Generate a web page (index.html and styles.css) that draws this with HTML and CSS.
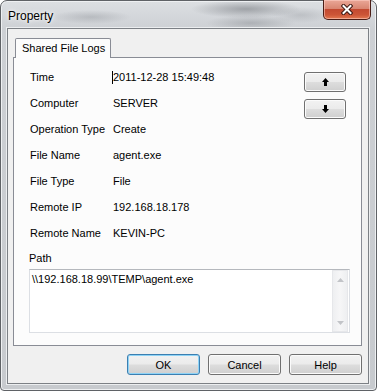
FILE: index.html
```html
<!DOCTYPE html>
<html lang="en">
<head>
    <meta charset="UTF-8">
    <title>Property</title>
    <link rel="stylesheet" href="styles.css">
</head>
<body>
    <div class="window">
        <div class="titlebar">
            <span class="title">Property</span>
            <button class="close" aria-label="Close">
                <svg width="12" height="11" viewBox="0 0 12 11">
                    <path d="M2.5 2 L9.5 9 M9.5 2 L2.5 9" stroke="#3b1712" stroke-width="4" stroke-linecap="square" fill="none"/>
                    <path d="M2.5 2 L9.5 9 M9.5 2 L2.5 9" stroke="#fff" stroke-width="2" stroke-linecap="square" fill="none"/>
                </svg>
            </button>
        </div>

        <div class="client">
            <div class="tabs">
                <div class="tab">Shared File Logs</div>
            </div>

            <div class="panel">
                <div class="top">
                    <dl class="fields">
                        <dt>Time</dt><dd><span class="caret"></span>2011-12-28 15:49:48</dd>
                        <dt>Computer</dt><dd>SERVER</dd>
                        <dt>Operation Type</dt><dd>Create</dd>
                        <dt>File Name</dt><dd>agent.exe</dd>
                        <dt>File Type</dt><dd>File</dd>
                        <dt>Remote IP</dt><dd>192.168.18.178</dd>
                        <dt>Remote Name</dt><dd>KEVIN-PC</dd>
                    </dl>
                    <div class="arrows">
                        <button class="btn arrow-btn" aria-label="Previous">
                            <svg width="7" height="8" viewBox="0 0 7 8"><path d="M3.5 0L7 4H5V8H2V4H0Z" fill="#000"/></svg>
                        </button>
                        <button class="btn arrow-btn" aria-label="Next">
                            <svg width="7" height="8" viewBox="0 0 7 8"><path d="M3.5 8L7 4H5V0H2V4H0Z" fill="#000"/></svg>
                        </button>
                    </div>
                </div>

                <div class="path-label">Path</div>
                <div class="textbox">
                    <div class="textbox-text">\\192.168.18.99\TEMP\agent.exe</div>
                    <div class="scrollbar">
                        <div class="scroll-arrow">
                            <svg width="7" height="4" viewBox="0 0 7 4"><path d="M3.5 0L7 4H0Z" fill="#c2c4c8"/></svg>
                        </div>
                        <div class="scroll-arrow">
                            <svg width="7" height="4" viewBox="0 0 7 4"><path d="M3.5 4L7 0H0Z" fill="#c2c4c8"/></svg>
                        </div>
                    </div>
                </div>
            </div>

            <div class="buttons">
                <button class="btn btn-default">OK</button>
                <button class="btn">Cancel</button>
                <button class="btn">Help</button>
            </div>
        </div>
    </div>
</body>
</html>
```

FILE: styles.css
```css
/* ウィンドウ全体 */
html, body {
    margin: 0;
    padding: 0;
}

body {
    width: 377px;
    height: 391px;
    font-family: "Liberation Sans", Arial, sans-serif;
    font-size: 11px;
    color: #000;
    background-color: #fff;
}

.window {
    box-sizing: border-box;
    width: 377px;
    height: 391px;
    border: 1px solid #5f6266;
    border-radius: 7px 7px 4px 4px;
    box-shadow: inset 0 0 0 1px #eef0f2;
    display: flex;
    flex-direction: column;
    background:
        radial-gradient(ellipse 55px 9px at 245px 8px, rgba(90, 94, 100, 0.45), rgba(90, 94, 100, 0)),
        radial-gradient(ellipse 45px 8px at 250px 22px, rgba(110, 114, 120, 0.35), rgba(110, 114, 120, 0)),
        radial-gradient(ellipse 40px 7px at 90px 16px, rgba(120, 124, 130, 0.3), rgba(120, 124, 130, 0)),
        radial-gradient(ellipse 30px 8px at 300px 14px, rgba(120, 124, 130, 0.25), rgba(120, 124, 130, 0)),
        linear-gradient(#dcdfe2, #cdd0d4 28px, #c7cace);
}

/* タイトルバー */
.titlebar {
    height: 27px;
    display: flex;
    align-items: flex-start;
    padding-left: 7px;
}

.title {
    font-size: 12px;
    line-height: 27px;
    margin-top: 2px;
    text-shadow: 0 0 6px #fff, 0 0 3px #fff;
}

.close {
    margin: -1px 5px 0 auto;
    padding: 0;
    width: 48px;
    height: 20px;
    border: 1px solid #4a1d16;
    border-top: none;
    border-radius: 0 0 5px 5px;
    background: linear-gradient(#eaa797 0%, #d98672 45%, #c34a31 50%, #cc5537 78%, #e47a52 100%);
    box-shadow: inset 0 0 0 1px rgba(255, 210, 200, 0.55);
    display: flex;
    align-items: center;
    justify-content: center;
}

/* クライアント領域 */
.client {
    flex: 1;
    margin: 0 7px 6px 6px;
    border: 1px solid #7c8085;
    box-shadow: 0 0 0 1px #eceef0;
    background-color: #f0f0f0;
    padding: 9px 6px 8px 5px;
    display: flex;
    flex-direction: column;
}

/* タブ */
.tabs {
    display: flex;
    height: 20px;
}

.tabs::before,
.tabs::after {
    content: "";
    border-bottom: 1px solid #898c95;
}

.tabs::before {
    width: 2px;
}

.tabs::after {
    flex: 1;
}

.tab {
    box-sizing: border-box;
    width: 96px;
    padding-left: 6px;
    border: 1px solid #898c95;
    border-bottom: none;
    border-radius: 2px 2px 0 0;
    background-color: #fcfcfc;
    line-height: 19px;
}

.panel {
    box-sizing: border-box;
    height: 288px;
    border: 1px solid #898c95;
    border-top: none;
    background-color: #fcfcfc;
    padding: 6px 11px 0 15px;
}

.top {
    display: flex;
}

.fields {
    flex: 1;
    margin: 0;
    padding-left: 1px;
    display: grid;
    grid-template-columns: 83px 1fr;
    grid-auto-rows: 26px;
    align-items: center;
}

.fields dt,
.fields dd {
    margin: 0;
    white-space: nowrap;
}

.caret {
    display: inline-block;
    width: 0;
    height: 13px;
    margin-left: -1px;
    border-left: 1px solid #000;
    vertical-align: -3px;
}

.arrows {
    display: flex;
    flex-direction: column;
    gap: 7px;
    margin: 8px 4px 0 0;
}

.path-label {
    margin-top: 5px;
    line-height: 14px;
}

.textbox {
    box-sizing: border-box;
    height: 64px;
    margin-top: 4px;
    border: 1px solid #dcdfe4;
    border-top-color: #b5b8bd;
    background-color: #fff;
    display: flex;
}

.textbox-text {
    flex: 1;
    padding: 2px 2px;
    line-height: 14px;
}

.scrollbar {
    box-sizing: border-box;
    width: 16px;
    margin-right: 1px;
    border: 1px solid #e6e7ea;
    background: linear-gradient(90deg, #eeeff1, #f6f6f7 50%, #eeeff1);
    display: flex;
    flex-direction: column;
    justify-content: space-between;
}

.scroll-arrow {
    height: 17px;
    display: flex;
    align-items: center;
    justify-content: center;
}

/* ボタン */
.btn {
    box-sizing: border-box;
    padding: 0;
    font-family: "Liberation Sans", Arial, sans-serif;
    font-size: 11px;
    color: #000;
    border: 1px solid #707070;
    border-radius: 3px;
    background: linear-gradient(#f2f2f2 0%, #ebebeb 48%, #dddddd 52%, #cfcfcf 100%);
    box-shadow: inset 0 0 0 1px #fbfbfb;
    display: flex;
    align-items: center;
    justify-content: center;
}

.btn-default {
    border-color: #3c7fb1;
    box-shadow: inset 0 0 0 1px #8ed3f6;
}

.arrow-btn {
    width: 42px;
    height: 20px;
}

.buttons {
    display: flex;
    justify-content: flex-end;
    gap: 8px;
    margin-top: 8px;
}

.buttons .btn {
    width: 73px;
    height: 21px;
}
```
